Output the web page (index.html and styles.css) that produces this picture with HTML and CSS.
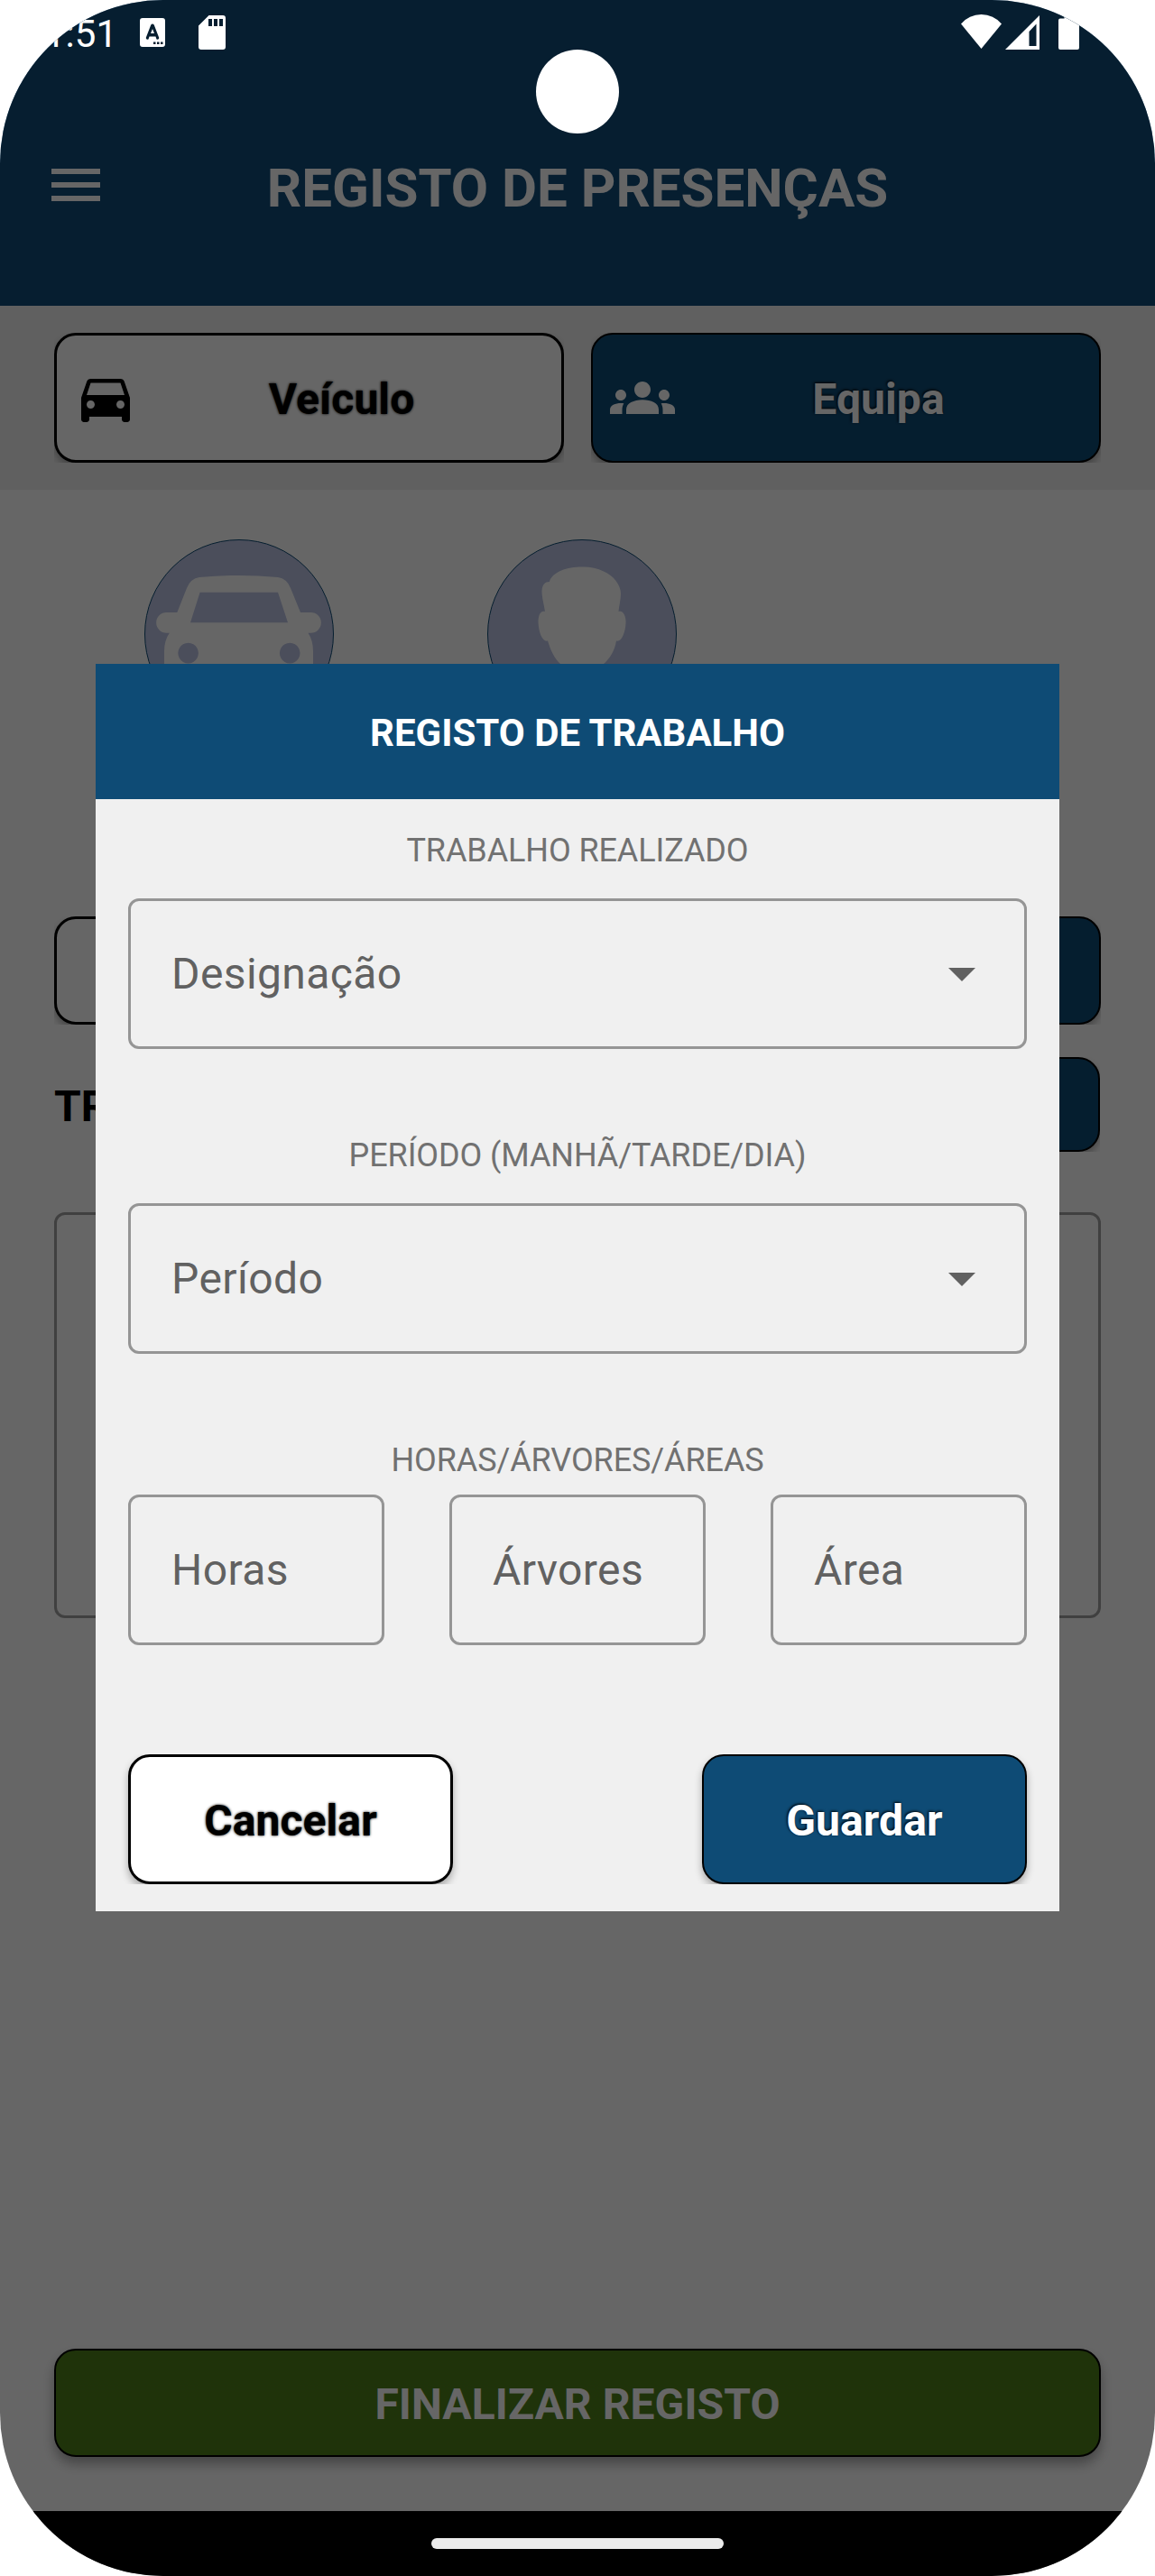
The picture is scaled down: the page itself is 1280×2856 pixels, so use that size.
FILE: index.html
```html
<!DOCTYPE html>
<html lang="pt">
<head>
<meta charset="utf-8">
<title>Registo de Presenças</title>
<link rel="stylesheet" href="styles.css">
</head>
<body>
<div class="screen">
  <div class="page">
    <header class="appbar">
      <div class="menu"><span></span><span></span><span></span></div>
      <h1 class="appbar-title">REGISTO DE PRESENÇAS</h1>
    </header>
    <div class="tabs">
      <button class="btn btn-light btn-tab">
        <svg class="icon" viewBox="0 0 24 24"><path d="M18.92 6.01C18.72 5.42 18.16 5 17.5 5h-11c-.66 0-1.21.42-1.42 1.01L3 12v8c0 .55.45 1 1 1h1c.55 0 1-.45 1-1v-1h12v1c0 .55.45 1 1 1h1c.55 0 1-.45 1-1v-8l-2.08-5.99zM6.5 16c-.83 0-1.5-.67-1.5-1.5S5.67 13 6.5 13s1.5.67 1.5 1.5S7.33 16 6.5 16zm11 0c-.83 0-1.5-.67-1.5-1.5s.67-1.5 1.5-1.5 1.5.67 1.5 1.5-.67 1.5-1.5 1.5zM5 11l1.5-4.5h11L19 11H5z"/></svg>
        <span class="btn-label">Veículo</span>
      </button>
      <button class="btn btn-blue btn-tab">
        <svg class="icon" viewBox="0 0 24 24"><path d="M4 13c1.1 0 2-.9 2-2s-.9-2-2-2-2 .9-2 2 .9 2 2 2zm1.13 1.1c-.37-.06-.74-.1-1.13-.1-.99 0-1.93.21-2.78.58C.48 14.9 0 15.62 0 16.43V18h4.5v-1.61c0-.83.23-1.61.63-2.29zM20 13c1.1 0 2-.9 2-2s-.9-2-2-2-2 .9-2 2 .9 2 2 2zm4 3.43c0-.81-.48-1.53-1.22-1.85-.85-.37-1.79-.58-2.78-.58-.39 0-.76.04-1.13.1.4.68.63 1.46.63 2.29V18H24v-1.57zM16.24 13.65c-1.17-.52-2.61-.9-4.24-.9s-3.07.39-4.24.9C6.68 14.13 6 15.21 6 16.39V18h12v-1.61c0-1.18-.68-2.26-1.76-2.74zM9 9c0 1.66 1.34 3 3 3s3-1.34 3-3-1.34-3-3-3-3 1.34-3 3z"/></svg>
        <span class="btn-label">Equipa</span>
      </button>
    </div>
    <main class="content">
      <div class="avatars">
        <div class="avatar">
          <svg viewBox="0 0 210 210"><path fill-rule="evenodd" d="M36.3 81L47 54Q51 43.500 61 42Q104.500 38 148 42Q158 43.500 162 54L173 81H184.500A11.300 11.300 0 0 1 184.500 103.700H181.500Q187 112 187 124V172H22V124Q22 112 27.800 103.700H24.500A11.300 11.300 0 0 1 24.500 81ZM61.600 58.700L51 92.300H159L148 58.700ZM48.600 114.800a11.300 11.300 0 1 0 .01 0ZM161.200 114.800a11.300 11.300 0 1 0 .01 0Z"/></svg>
        </div>
        <div class="avatar">
          <svg viewBox="0 0 210 210"><path d="M69 47C71 38 85 31 102 30.500C112 30 121 31 129 35.500C140 40 148 51 148 60C148 67 146 74 145.500 80C151 78 154 86 153.500 93C153 103 149 114 143 112.500C141 124 136 132 129 138C124 154 150 160 170 170V210H40V170C60 160 86 154 81 138C74 132 70 122 67 112.500C61 114 57 103 56.500 92C56.500 84 59 79 64 80C63 73 60.400 64 60.500 57C61 50 64 47 69 47Z"/></svg>
        </div>
      </div>
      <div class="actions">
        <div class="btn btn-light"></div>
        <div class="btn btn-blue"></div>
      </div>
      <div class="works-head">
        <span class="works-title">TRABALHOS</span>
        <div class="btn btn-blue btn-add"></div>
      </div>
      <div class="works-box"></div>
      <button class="btn btn-green"><span class="btn-label">FINALIZAR REGISTO</span></button>
    </main>
  </div>

  <div class="scrim">
    <section class="dialog">
      <h2 class="dialog-title">REGISTO DE TRABALHO</h2>
      <div class="dialog-body">
        <div class="group">
          <label class="caption">TRABALHO REALIZADO</label>
          <div class="field"><span>Designação</span><svg class="arrow" viewBox="0 0 30 15"><path d="M0 0h30L15 15z"/></svg></div>
        </div>
        <div class="group">
          <label class="caption">PERÍODO (MANHÃ/TARDE/DIA)</label>
          <div class="field"><span>Período</span><svg class="arrow" viewBox="0 0 30 15"><path d="M0 0h30L15 15z"/></svg></div>
        </div>
        <div class="group group-tight">
          <label class="caption">HORAS/ÁRVORES/ÁREAS</label>
          <div class="triple">
            <div class="field"><span>Horas</span></div>
            <div class="field"><span>Árvores</span></div>
            <div class="field"><span>Área</span></div>
          </div>
        </div>
        <div class="dialog-actions">
          <button class="btn btn-light"><span class="btn-label">Cancelar</span></button>
          <button class="btn btn-blue"><span class="btn-label">Guardar</span></button>
        </div>
      </div>
    </section>
  </div>

  <div class="status">
    <span class="clock">1:51</span>
    <svg class="st-a" viewBox="0 0 28 32"><path fill-rule="evenodd" d="M3 0H25Q28 0 28 3V29Q28 32 25 32H3Q0 32 0 29V3Q0 0 3 0ZM12.300 7.500Q14 5.500 15.700 7.500L21.300 22Q21 24.500 18.500 23.500L17.500 20.500H10.500L9.500 23.500Q7 24.500 6.700 22ZM14 12L12 17H16ZM15 26.500h2.500v2.500H15ZM19 26.500h2.500v2.500H19ZM23 26.500h2.500v2.500H23Z"/></svg>
    <svg class="st-sd" viewBox="0 0 30 38"><path fill-rule="evenodd" d="M11.500 0H27Q30 0 30 3V35Q30 38 27 38H3Q0 38 0 35V11.500ZM11 4V12H15V4ZM17 4V12H21V4ZM23 4V12H27V4Z"/></svg>
    <svg class="st-wifi" viewBox="0 0 45 38"><path d="M0 10.500Q9 0 22.500 0T45 10.500L22.500 38Z"/></svg>
    <svg class="st-cell" viewBox="0 0 38 38"><path fill-rule="evenodd" d="M38 0V38H0ZM34.500 9.500L26.500 18V34H34.500Z"/></svg>
    <svg class="st-bat" viewBox="0 0 23 38"><path d="M6.500 0H16.500V3.500H21Q23 3.500 23 5.500V36Q23 38 21 38H2Q0 38 0 36V5.500Q0 3.500 2 3.500H6.500Z"/></svg>
  </div>
  <div class="camera"></div>
  <div class="navbar"><span class="handle"></span></div>
</div>
</body>
</html>
```
FILE: styles.css
```css
* { box-sizing: border-box; }
body { margin: 0; background: #fff; font-family: Roboto, "Liberation Sans", sans-serif; }
h1, h2 { margin: 0; font-weight: 700; }
button { font: inherit; padding: 0; margin: 0; }
svg { display: block; flex: none; }

.screen {
  position: relative;
  width: 1280px;
  height: 2856px;
  border-radius: 181px;
  overflow: hidden;
  background: #fff;
}

/* page under the dialog */
.page { height: 2784px; display: flex; flex-direction: column; background: #fff; }
.appbar {
  height: 339px;
  padding: 71px 57px 0;
  background: #114b78;
  color: #fff;
  display: grid;
  grid-template-columns: 54px 1fr 54px;
  align-items: center;
}
.menu { display: flex; flex-direction: column; gap: 9px; }
.menu span { height: 6px; background: #fff; }
.appbar-title { font-size: 60px; line-height: 70px; text-align: center; padding-top: 7px; white-space: nowrap; }

.tabs {
  display: grid;
  grid-template-columns: 1fr 1fr;
  gap: 30px;
  height: 204px;
  padding: 30px 60px;
  background: #f0f0f0;
}
.btn {
  display: flex;
  align-items: center;
  justify-content: center;
  border-radius: 24px;
  font-size: 48px;
  font-weight: 700;
  letter-spacing: .1px;
  box-shadow: 0 5px 9px rgba(0, 0, 0, .3);
  clip-path: inset(0);
}
.btn-label { padding-top: 3px; }
.btn-light { background: #fff; color: #000; border: 3px solid #000; text-shadow: 0 0 3px #000; }
.btn-blue { background: #0e4b75; color: #fff; border: 2px solid #000; text-shadow: -1px -1px 3px #000; }
.btn-tab { padding: 0 19px; }
.btn-light.btn-tab { padding: 0 18px; }
.icon { width: 72px; height: 72px; fill: currentColor; }
.btn-tab .btn-label { flex: 1; text-align: center; }

.content { flex: 1; display: flex; flex-direction: column; padding: 55px 60px 60px; }
.avatars { display: flex; gap: 170px; padding-left: 100px; height: 418px; }
.avatar {
  width: 210px;
  height: 210px;
  border-radius: 50%;
  border: 1px solid #0e4b75;
  background: #bbc3e3;
  overflow: hidden;
}
.avatar svg { width: 210px; height: 210px; margin: -1px; fill: #fff; }
.actions { display: grid; grid-template-columns: 1fr 1fr; gap: 30px; height: 120px; }
.works-head { display: flex; justify-content: space-between; align-items: center; height: 105px; margin-top: 36px; }
.works-title { font-size: 48px; font-weight: 700; padding-top: 3px; }
.btn-add { width: 300px; height: 105px; margin-right: 1px; }
.works-box { height: 450px; margin-top: 67px; border: 3px solid #a0a0a0; border-radius: 12px; }
.btn-green {
  margin-top: auto;
  height: 120px;
  background: #4e8019;
  color: #fff;
  border: 2px solid #000;
  clip-path: none;
  box-shadow: 0 8px 13px rgba(0, 0, 0, .32);
}

/* dialog */
.scrim {
  position: absolute;
  inset: 0;
  padding: 736px 106px 0;
  background: rgba(0, 0, 0, .6);
}
.dialog { height: 1383px; background: #f0f0f0; }
.dialog-title {
  height: 150px;
  display: flex;
  align-items: center;
  justify-content: center;
  background: #0e4b75;
  color: #fff;
  font-size: 42px;
  padding-top: 3px;
}
.dialog-body { padding: 35px 36px 0; }
.group { height: 338px; }
.group-tight { height: 348px; }
.caption {
  display: block;
  height: 75px;
  padding-top: 1px;
  font-size: 36px;
  line-height: 42px;
  letter-spacing: -.1px;
  text-align: center;
  color: #717171;
}
.group-tight .caption { height: 60px; }
.field {
  height: 167px;
  display: flex;
  align-items: center;
  justify-content: space-between;
  padding: 0 54px 0 45px;
  border: 3px solid #959595;
  border-radius: 12px;
  color: #616161;
  font-size: 48px;
  letter-spacing: .4px;
}
.arrow { width: 30px; height: 15px; fill: #616161; margin-top: 1px; }
.triple { display: grid; grid-template-columns: repeat(3, 1fr); gap: 72px; }
.dialog-actions { display: flex; justify-content: space-between; }
.dialog-actions .btn { width: 360px; height: 144px; clip-path: inset(0 -10px 0 -10px); }

/* system bars */
.status { position: absolute; top: 0; left: 0; width: 1280px; height: 72px; color: #fff; display: flex; align-items: flex-start; padding: 16px 84px 0 49px; }
.status svg { fill: #fff; }
.clock { font-size: 42px; line-height: 42px; width: 106px; padding-top: 1px; }
.st-a { width: 28px; height: 32px; margin-top: 4px; }
.st-sd { width: 30px; height: 38px; margin: 1px auto 0 37px; }
.st-wifi { width: 45px; height: 38px; }
.st-cell { width: 38px; height: 38px; margin: 1px 21px 0 4px; }
.st-bat { width: 23px; height: 38px; margin-top: 1px; }
.camera { position: absolute; top: 55px; left: 594px; width: 92px; height: 93px; border-radius: 50%; background: #fff; }
.navbar {
  position: absolute;
  left: 0;
  bottom: 0;
  width: 1280px;
  height: 72px;
  background: #000;
  display: flex;
  align-items: center;
  justify-content: center;
}
.handle { width: 324px; height: 12px; border-radius: 6px; background: #ebebeb; }
```
